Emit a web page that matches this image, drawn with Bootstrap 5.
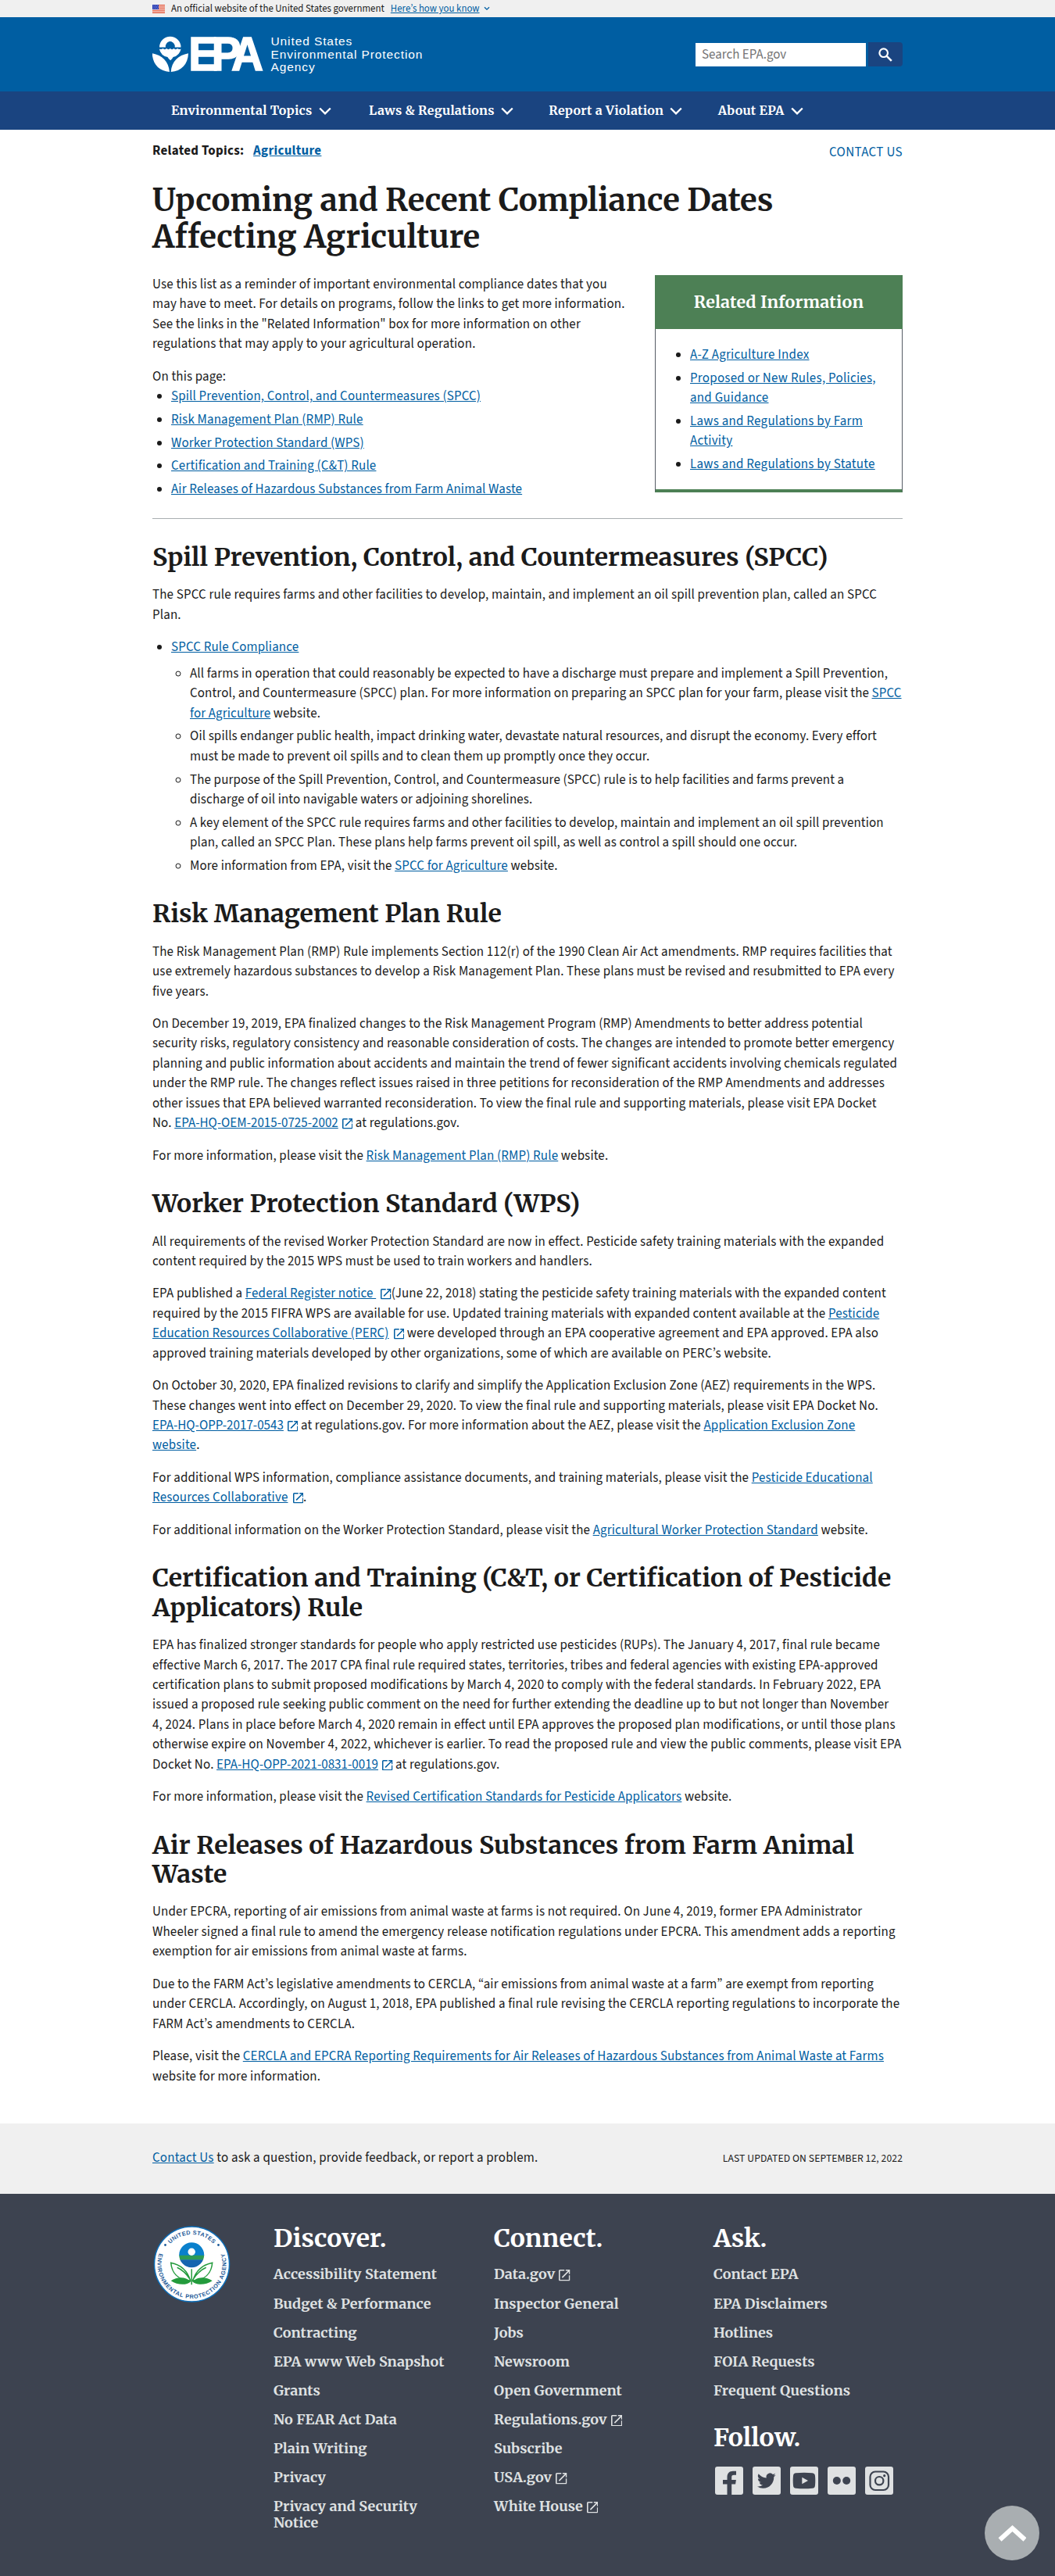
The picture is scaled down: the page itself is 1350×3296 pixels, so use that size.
<!DOCTYPE html>
<html lang="en">
<head>
<meta charset="utf-8">
<meta name="viewport" content="width=device-width, initial-scale=1">
<title>Upcoming and Recent Compliance Dates Affecting Agriculture | US EPA</title>
<link rel="stylesheet" href="https://cdn.jsdelivr.net/npm/bootstrap@5.3.0/dist/css/bootstrap.min.css">
<style>
:root{--sans:"Source Sans 3","Noto Sans CJK SC","Open Sans",sans-serif;--serif:Merriweather,"Noto Serif","DejaVu Serif Condensed",serif}
body{font-family:var(--sans);font-size:16.96px;line-height:25.44px;color:#1b1b1b;letter-spacing:.16px;background:#fff}
a{color:#005ea2}
.wrap{width:960px;margin:0 auto}
.gov-banner{background:#f0f0f0;height:22px;font-size:12.8px;line-height:22px;letter-spacing:.02px}
.site-header{background:#005ea2;height:95px}
.search-form{height:95px}
.search-field{width:218px;height:30px;padding:0 8px;border:0;border-radius:0;font:16.96px/30px var(--sans);color:#1b1b1b}
.search-field::placeholder{color:#757575;opacity:1}
.search-btn{width:44px;height:31px;background:#1a4480;border-radius:0 4px 4px 0;margin-left:3px}
.main-nav{background:#1a4480;height:49px;font:700 16px/49px var(--serif);letter-spacing:.25px}
.main-nav .wrap{padding-left:24px}
.main-nav a{color:#fff}
.nv{margin-right:45.5px;white-space:nowrap}
.nv:first-child{margin-right:48.5px}
.chev{margin-left:4px;vertical-align:0}
h1,h2,h3{font-family:var(--serif);font-weight:700;line-height:1.17;letter-spacing:0;color:#1b1b1b}
h1{font-size:40px;margin:0}
h2{font-size:32px;margin:30px 0 17px;letter-spacing:.05px}
p{margin:0 0 16px;white-space:nowrap}
.lines{white-space:nowrap}
ul{padding-left:24px;margin:0}
li{margin-bottom:4.3px}
.sub-list{letter-spacing:.13px}
.page-top{height:67.4px;padding-top:14.5px}
.topics{font-weight:700;letter-spacing:.3px}
.contact{padding-top:2px;letter-spacing:.35px}
.intro{height:336px;padding-top:25px}
.info-box{width:317px;height:278px;border:1px solid #565c65;border-top:0;border-bottom:4px solid #4d8055;border-radius:0}
.info-head{background:#4d8055;color:#fff;font:700 21.4px/69px var(--serif);text-align:center;margin:0 -1px;letter-spacing:.2px}
.info-box ul{padding:21px 0 0 44px;letter-spacing:.26px}
.rule{border-top:1px solid #a9aeb1;margin-bottom:31px}
.ext{width:13.5px;height:13.5px;margin-left:6px;vertical-align:-2.5px;fill:currentColor}
.docket{letter-spacing:.02px}
.docket .ext{margin-left:5px}
.last-line{padding-bottom:47px}
.updated-bar{background:#f0f0f0;height:90px}
.ask-line{letter-spacing:.2px}
.updated{font-size:13.6px;letter-spacing:.1px}
.site-footer{background:#3d4350;height:489px;padding-top:39px}
.site-footer h2{color:#fff;margin:0 0 16px}
.foot-list{list-style:none;padding:0;font:700 18px/21px var(--serif);letter-spacing:.06px}
.foot-list li{margin-bottom:16.1px}
.foot-list a{color:#dfe1e2;text-decoration:none}
.foot-list .ext{width:14.5px;height:14.5px;vertical-align:-2.5px;margin-left:5px}
.c-seal{width:155px}.c-a{width:282px}.c-b{width:281px}
.socials{gap:12px;margin-top:18px;padding-left:2px}
.to-top{position:fixed;right:20px;bottom:20px;width:70px;height:70px;border-radius:50%;background:#a9aeb1}
</style>
<script src="https://cdn.jsdelivr.net/npm/bootstrap@5.3.0/dist/js/bootstrap.bundle.min.js"></script>
</head>
<body>
<svg width="0" height="0" class="d-none">
  <symbol id="launch" viewBox="3 3 18 18"><path d="M19 19H5V5h7V3H5a2 2 0 0 0-2 2v14a2 2 0 0 0 2 2h14c1.100 0 2-.9 2-2v-7h-2v7zM14 3v2h3.590l-9.830 9.830 1.410 1.410L19 6.410V10h2V3h-7z"/></symbol>
  <symbol id="down" viewBox="0 0 16 10"><path d="M1.200 1.500 8 8.300l6.800-6.800" fill="none" stroke="#fff" stroke-width="2.400"/></symbol>
</svg>

<div class="gov-banner">
  <div class="wrap d-flex align-items-center">
    <svg width="16" height="11" viewBox="0 0 16 11" class="flex-shrink-0"><path fill="#fff" d="M0 0h16v11H0z"/><path stroke="#db3e1f" stroke-width=".9" d="M0 .5h16M0 2.200h16M0 3.900h16M0 5.600h16M0 7.300h16M0 9h16M0 10.600h16"/><path fill="#1e33b1" d="M0 0h8v6H0z"/><path stroke="#fff" stroke-width=".7" stroke-dasharray=".8 1" d="M.8 1.300h7M1.500 3h6M.8 4.700h7"/></svg>
    <span class="ms-2 text-nowrap">An official website of the United States government</span>
    <a href="#" class="ms-2">Here’s how you know</a>
    <svg class="ms-1" width="10" height="6" viewBox="-1 0 10 6"><path d="M1 1.200l3 3 3-3" fill="none" stroke="#005ea2" stroke-width="1.300"/></svg>
  </div>
</div>

<header class="site-header">
  <div class="wrap d-flex justify-content-between">
    <svg width="360" height="95" viewBox="195 22 360 95">
      <g fill="#fff">
        <path d="M204 60.500a13.700 13.700 0 0 1 27.500 0h-7.800a6 6 0 1 0-11.800 0z"/>
        <circle cx="217.700" cy="57.200" r="4.300" fill="#005ea2"/>
        <path d="M203.800 62.400c2 1.300 3.500.6 4.600-.3 1.400 1.400 3.500 1.400 4.700 0 1.300 1.400 3.400 1.400 4.700 0 1.200 1.400 3.300 1.400 4.600 0 1.200 1.400 3.300 1.400 4.700 0 1.200.9 2.700 1.300 4.500.3a14 14 0 0 1-10 10.700l-1.300 2-2.200 2.200-2.300-2.200-1.400-2a14 14 0 0 1-10.600-10.700z"/>
        <path d="M194.700 68.200c12.500 2.300 21.300 10.500 22.200 23.800-13.200-1-21.600-9.600-22.200-23.800zM241 68.200c-12.800 2.300-21.500 10.500-22.300 23.800 13.300-1 21.800-9.600 22.300-23.800z"/>
      </g>
      <g font-family="Liberation Sans, Arial, sans-serif" fill="#fff">
        <text font-weight="700" font-size="61" stroke="#fff" stroke-width="1.600" transform="translate(241.300 89.500) scale(.93 1)" letter-spacing="-9">EPA</text>
        <g font-size="15.500" letter-spacing=".9"><text x="346.500" y="58">United States</text><text x="346.500" y="74.500">Environmental Protection</text><text x="346.500" y="91">Agency</text></g>
      </g>
    </svg>
    <form class="search-form d-flex align-items-center">
      <input class="search-field" type="text" placeholder="Search EPA.gov" aria-label="Search">
      <button class="search-btn border-0 d-flex align-items-center justify-content-center p-0" type="button" aria-label="Search"><svg width="18" height="18" viewBox="0 0 18 18"><circle cx="6.700" cy="6.700" r="5.300" fill="none" stroke="#fff" stroke-width="2.200"/><path d="m10.800 10.800 6 6" stroke="#fff" stroke-width="2.600"/></svg></button>
    </form>
  </div>
</header>

<nav class="main-nav">
  <div class="wrap d-flex">
    <a href="#" class="nv text-decoration-none">Environmental Topics <svg width="16" height="10" class="chev"><use href="#down"/></svg></a>
    <a href="#" class="nv text-decoration-none">Laws &amp; Regulations <svg width="16" height="10" class="chev"><use href="#down"/></svg></a>
    <a href="#" class="nv text-decoration-none">Report a Violation <svg width="16" height="10" class="chev"><use href="#down"/></svg></a>
    <a href="#" class="nv text-decoration-none">About EPA <svg width="16" height="10" class="chev"><use href="#down"/></svg></a>
  </div>
</nav>

<main class="wrap">
  <div class="page-top d-flex justify-content-between">
    <div class="topics">Related Topics: <a href="#" class="ms-2">Agriculture</a></div>
    <a href="#" class="text-decoration-none contact">CONTACT US</a>
  </div>
  <h1>Upcoming and Recent Compliance Dates<br>Affecting Agriculture</h1>
  <div class="intro d-flex justify-content-between">
    <div>
      <p>Use this list as a reminder of important environmental compliance dates that you<br>may have to meet. For details on programs, follow the links to get more information.<br>See the links in the "Related Information" box for more information on other<br>regulations that may apply to your agricultural operation.</p>
      <div>On this page:</div>
      <ul class="lines">
        <li><a href="#">Spill Prevention, Control, and Countermeasures (SPCC)</a></li>
        <li><a href="#">Risk Management Plan (RMP) Rule</a></li>
        <li><a href="#">Worker Protection Standard (WPS)</a></li>
        <li><a href="#">Certification and Training (C&amp;T) Rule</a></li>
        <li><a href="#">Air Releases of Hazardous Substances from Farm Animal Waste</a></li>
      </ul>
    </div>
    <aside class="info-box">
      <div class="info-head">Related Information</div>
      <ul class="lines">
        <li><a href="#">A-Z Agriculture Index</a></li>
        <li><a href="#">Proposed or New Rules, Policies,<br>and Guidance</a></li>
        <li><a href="#">Laws and Regulations by Farm<br>Activity</a></li>
        <li><a href="#">Laws and Regulations by Statute</a></li>
      </ul>
    </aside>
  </div>
  <div class="rule"></div>

  <h2>Spill Prevention, Control, and Countermeasures (SPCC)</h2>
  <p>The SPCC rule requires farms and other facilities to develop, maintain, and implement an oil spill prevention plan, called an SPCC<br>Plan.</p>
  <ul class="lines">
    <li><a href="#">SPCC Rule Compliance</a>
      <ul class="mt-2 sub-list">
        <li>All farms in operation that could reasonably be expected to have a discharge must prepare and implement a Spill Prevention,<br>Control, and Countermeasure (SPCC) plan. For more information on preparing an SPCC plan for your farm, please visit the <a href="#">SPCC<br>for Agriculture</a> website.</li>
        <li>Oil spills endanger public health, impact drinking water, devastate natural resources, and disrupt the economy. Every effort<br>must be made to prevent oil spills and to clean them up promptly once they occur.</li>
        <li>The purpose of the Spill Prevention, Control, and Countermeasure (SPCC) rule is to help facilities and farms prevent a<br>discharge of oil into navigable waters or adjoining shorelines.</li>
        <li>A key element of the SPCC rule requires farms and other facilities to develop, maintain and implement an oil spill prevention<br>plan, called an SPCC Plan. These plans help farms prevent oil spill, as well as control a spill should one occur.</li>
        <li class="mb-0">More information from EPA, visit the <a href="#">SPCC for Agriculture</a> website.</li>
      </ul>
    </li>
  </ul>

  <h2>Risk Management Plan Rule</h2>
  <p>The Risk Management Plan (RMP) Rule implements Section 112(r) of the 1990 Clean Air Act amendments. RMP requires facilities that<br>use extremely hazardous substances to develop a Risk Management Plan. These plans must be revised and resubmitted to EPA every<br>five years.</p>
  <p>On December 19, 2019, EPA finalized changes to the Risk Management Program (RMP) Amendments to better address potential<br>security risks, regulatory consistency and reasonable consideration of costs. The changes are intended to promote better emergency<br>planning and public information about accidents and maintain the trend of fewer significant accidents involving chemicals regulated<br>under the RMP rule. The changes reflect issues raised in three petitions for reconsideration of the RMP Amendments and addresses<br>other issues that EPA believed warranted reconsideration. To view the final rule and supporting materials, please visit EPA Docket<br>No. <a href="#" class="docket">EPA-HQ-OEM-2015-0725-2002<svg class="ext"><use href="#launch"/></svg></a> at regulations.gov.</p>
  <p>For more information, please visit the <a href="#">Risk Management Plan (RMP) Rule</a> website.</p>

  <h2>Worker Protection Standard (WPS)</h2>
  <p>All requirements of the revised Worker Protection Standard are now in effect. Pesticide safety training materials with the expanded<br>content required by the 2015 WPS must be used to train workers and handlers.</p>
  <p>EPA published a <a href="#">Federal Register notice&nbsp;<svg class="ext"><use href="#launch"/></svg></a>(June 22, 2018) stating the pesticide safety training materials with the expanded content<br>required by the 2015 FIFRA WPS are available for use. Updated training materials with expanded content available at the <a href="#">Pesticide<br>Education Resources Collaborative (PERC)<svg class="ext"><use href="#launch"/></svg></a> were developed through an EPA cooperative agreement and EPA approved. EPA also<br>approved training materials developed by other organizations, some of which are available on PERC’s website.</p>
  <p>On October 30, 2020, EPA finalized revisions to clarify and simplify the Application Exclusion Zone (AEZ) requirements in the WPS.<br>These changes went into effect on December 29, 2020. To view the final rule and supporting materials, please visit EPA Docket No.<br><a href="#" class="docket">EPA-HQ-OPP-2017-0543<svg class="ext"><use href="#launch"/></svg></a> at regulations.gov. For more information about the AEZ, please visit the <a href="#">Application Exclusion Zone<br>website</a>.</p>
  <p>For additional WPS information, compliance assistance documents, and training materials, please visit the <a href="#">Pesticide Educational<br>Resources Collaborative<svg class="ext"><use href="#launch"/></svg></a>.</p>
  <p>For additional information on the Worker Protection Standard, please visit the <a href="#">Agricultural Worker Protection Standard</a> website.</p>

  <h2>Certification and Training (C&amp;T, or Certification of Pesticide<br>Applicators) Rule</h2>
  <p>EPA has finalized stronger standards for people who apply restricted use pesticides (RUPs). The January 4, 2017, final rule became<br>effective March 6, 2017. The 2017 CPA final rule required states, territories, tribes and federal agencies with existing EPA-approved<br>certification plans to submit proposed modifications by March 4, 2020 to comply with the federal standards. In February 2022, EPA<br>issued a proposed rule seeking public comment on the need for further extending the deadline up to but not longer than November<br>4, 2024. Plans in place before March 4, 2020 remain in effect until EPA approves the proposed plan modifications, or until those plans<br>otherwise expire on November 4, 2022, whichever is earlier. To read the proposed rule and view the public comments, please visit EPA<br>Docket No. <a href="#" class="docket">EPA-HQ-OPP-2021-0831-0019<svg class="ext"><use href="#launch"/></svg></a> at regulations.gov.</p>
  <p>For more information, please visit the <a href="#">Revised Certification Standards for Pesticide Applicators</a> website.</p>

  <h2>Air Releases of Hazardous Substances from Farm Animal<br>Waste</h2>
  <p>Under EPCRA, reporting of air emissions from animal waste at farms is not required. On June 4, 2019, former EPA Administrator<br>Wheeler signed a final rule to amend the emergency release notification regulations under EPCRA. This amendment adds a reporting<br>exemption for air emissions from animal waste at farms.</p>
  <p>Due to the FARM Act’s legislative amendments to CERCLA, “air emissions from animal waste at a farm” are exempt from reporting<br>under CERCLA. Accordingly, on August 1, 2018, EPA published a final rule revising the CERCLA reporting regulations to incorporate the<br>FARM Act’s amendments to CERCLA.</p>
  <p class="mb-0 last-line">Please, visit the <a href="#">CERCLA and EPCRA Reporting Requirements for Air Releases of Hazardous Substances from Animal Waste at Farms</a><br>website for more information.</p>
</main>

<div class="updated-bar">
  <div class="wrap h-100 d-flex justify-content-between align-items-center">
    <div class="ask-line"><a href="#">Contact Us</a> to ask a question, provide feedback, or report a problem.</div>
    <div class="updated">LAST UPDATED ON SEPTEMBER 12, 2022</div>
  </div>
</div>

<footer class="site-footer">
  <div class="wrap d-flex">
    <div class="c-seal flex-shrink-0">
      <svg width="101" height="101" viewBox="0 0 101 101">
        <defs><path id="arc-top" d="M12.500 51a38 38 0 0 1 76 0"/><path id="arc-low" d="M9.500 35A44 44 0 1 0 91.500 35"/></defs>
        <circle cx="50.500" cy="51" r="48" fill="#fff" stroke="#0e6eb8" stroke-width="1.500"/>
        <g font-family="Liberation Sans, Arial, sans-serif" font-size="7.300" font-weight="700" fill="#1d5a98">
          <text><textPath href="#arc-top" startOffset="50%" text-anchor="middle" textLength="62">UNITED STATES</textPath></text>
          <text><textPath href="#arc-low" startOffset="50%" text-anchor="middle" textLength="166">ENVIRONMENTAL PROTECTION AGENCY</textPath></text>
        </g>
        <circle cx="16.500" cy="26.500" r="1.400" fill="#1d5a98"/><circle cx="84.500" cy="26.500" r="1.400" fill="#1d5a98"/>
        <g transform="translate(-.3 -1.800)">
        <clipPath id="globe"><circle cx="50.500" cy="41" r="16"/></clipPath>
        <g clip-path="url(#globe)"><path fill="#0a80cc" d="M30 20h40v22H30z"/><path fill="#2d9b56" d="M30 41.500h40v6H30z"/><path fill="#1565b0" d="M30 47h40v12H30z"/></g>
        <circle cx="50.500" cy="37" r="4.700" fill="#fff"/>
        <g fill="none" stroke="#239b3c" stroke-width="1.500"><path d="M50.500 59v20"/><path d="M49 74c-3-10-10-20-25-23 1 12 8 22 25 23zM32 57c7 3 12 8 17 16M52 74c3-10 10-20 25-23-1 12-8 22-25 23zM69 57c-7 3-12 8-17 16"/></g>
        <path fill="#239b3c" d="M24 74c8-5 18-6 25.500 1-5 5-17 5-25.500-1zM77 74c-8-5-18-6-25.500 1 5 5 17 5 25.500-1z"/>
        </g>
      </svg>
    </div>
    <div class="c-a flex-shrink-0">
      <h2>Discover.</h2>
      <ul class="foot-list">
        <li><a href="#">Accessibility Statement</a></li><li><a href="#">Budget &amp; Performance</a></li><li><a href="#">Contracting</a></li><li><a href="#">EPA www Web Snapshot</a></li><li><a href="#">Grants</a></li><li><a href="#">No FEAR Act Data</a></li><li><a href="#">Plain Writing</a></li><li><a href="#">Privacy</a></li><li><a href="#">Privacy and Security<br>Notice</a></li>
      </ul>
    </div>
    <div class="c-b flex-shrink-0">
      <h2>Connect.</h2>
      <ul class="foot-list">
        <li><a href="#">Data.gov<svg class="ext"><use href="#launch"/></svg></a></li><li><a href="#">Inspector General</a></li><li><a href="#">Jobs</a></li><li><a href="#">Newsroom</a></li><li><a href="#">Open Government</a></li><li><a href="#">Regulations.gov<svg class="ext"><use href="#launch"/></svg></a></li><li><a href="#">Subscribe</a></li><li><a href="#">USA.gov<svg class="ext"><use href="#launch"/></svg></a></li><li><a href="#">White House<svg class="ext"><use href="#launch"/></svg></a></li>
      </ul>
    </div>
    <div>
      <h2>Ask.</h2>
      <ul class="foot-list">
        <li><a href="#">Contact EPA</a></li><li><a href="#">EPA Disclaimers</a></li><li><a href="#">Hotlines</a></li><li><a href="#">FOIA Requests</a></li><li><a href="#">Frequent Questions</a></li>
      </ul>
      <h2 class="pt-3">Follow.</h2>
      <div class="d-flex socials">
        <svg width="36" height="36" viewBox="0 0 36 36"><rect width="36" height="36" rx="3" fill="#dfe1e2"/><path fill="#3d4350" d="M15.500 36V22.500H10V17h5.500v-3.500c0-5 3-7.700 7.500-7.700h4v5h-2.800c-2.500 0-3 1.200-3 3V17h5.700l-.8 5.500h-4.900V36z"/></svg>
        <svg width="36" height="36" viewBox="0 0 36 36"><rect width="36" height="36" rx="3" fill="#dfe1e2"/><path fill="#3d4350" transform="translate(6 5.500) scale(1.480)" d="M5.026 15c6.038 0 9.341-5.003 9.341-9.334 0-.14 0-.282-.006-.422A6.685 6.685 0 0 0 16 3.542a6.658 6.658 0 0 1-1.889.518 3.301 3.301 0 0 0 1.447-1.817 6.533 6.533 0 0 1-2.087.793A3.286 3.286 0 0 0 7.875 6.030a9.325 9.325 0 0 1-6.767-3.429 3.289 3.289 0 0 0 1.018 4.382A3.323 3.323 0 0 1 .64 6.575v.045a3.288 3.288 0 0 0 2.632 3.218 3.203 3.203 0 0 1-.865.115 3.230 3.230 0 0 1-.614-.057 3.283 3.283 0 0 0 3.067 2.277A6.588 6.588 0 0 1 .78 13.580a6.320 6.320 0 0 1-.78-.045A9.344 9.344 0 0 0 5.026 15z"/></svg>
        <svg width="36" height="36" viewBox="0 0 36 36"><rect width="36" height="36" rx="3" fill="#dfe1e2"/><path fill="#3d4350" d="M7.500 8.200q10.500-1 21 0c2.500.3 3.300 1.500 3.500 3.800q.6 6 0 12c-.2 2.300-1 3.500-3.500 3.800q-10.500 1-21 0C5 27.500 4.200 26.300 4 24q-.6-6 0-12c.2-2.300 1-3.500 3.500-3.800z"/><path fill="#dfe1e2" d="m15.300 13.800 7.700 4.200-7.700 4.300z"/></svg>
        <svg width="36" height="36" viewBox="0 0 36 36"><rect width="36" height="36" rx="3" fill="#dfe1e2"/><g fill="#3d4350"><circle cx="11.800" cy="18" r="5"/><circle cx="24.200" cy="18" r="5"/></g></svg>
        <svg width="36" height="36" viewBox="0 0 36 36"><rect width="36" height="36" rx="3" fill="#dfe1e2"/><g fill="none" stroke="#3d4350" stroke-width="2.200"><rect x="6.500" y="6.500" width="23.500" height="23.500" rx="6.500"/><circle cx="18.200" cy="18.200" r="5.200"/></g><circle cx="24.700" cy="11.700" r="1.600" fill="#3d4350"/></svg>
      </div>
    </div>
  </div>
</footer>

<a href="#" class="to-top d-flex align-items-center justify-content-center" aria-label="Back to top"><svg width="36" height="24" viewBox="0 0 36 24"><path d="M2.500 20.500 18.500 6l16 14.500" fill="none" stroke="#fff" stroke-width="6"/></svg></a>
</body>
</html>
